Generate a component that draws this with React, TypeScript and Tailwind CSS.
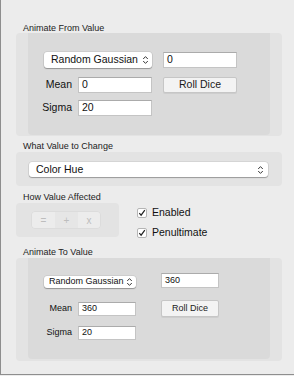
import type { ReactNode } from 'react'

const FONT = "font-['Liberation_Sans',Arial,sans-serif]"

function Chevrons() {
  return (
    <svg width="7" height="10" viewBox="0 0 7 10" className="shrink-0">
      <path d="M1.2 4 L3.5 1.6 L5.8 4" fill="none" stroke="#3a3a3a" strokeWidth="1" />
      <path d="M1.2 6 L3.5 8.4 L5.8 6" fill="none" stroke="#3a3a3a" strokeWidth="1" />
    </svg>
  )
}

function Select({ label, className }: { label: string; className: string }) {
  return (
    <div
      className={`flex items-center justify-between rounded-[3px] bg-white pr-[3px] text-[#111] shadow-[0_1px_1px_rgba(0,0,0,0.28),0_0_0_0.5px_rgba(0,0,0,0.12)] ${className}`}
    >
      <span className="whitespace-nowrap">{label}</span>
      <Chevrons />
    </div>
  )
}

function Field({ value, className }: { value: string; className: string }) {
  return (
    <div
      className={`flex items-center border border-[#c4c4c4] border-t-[#ababab] bg-white pl-[3px] text-[#111] ${className}`}
    >
      {value}
    </div>
  )
}

function Button({ label, className }: { label: string; className: string }) {
  return (
    <div
      className={`flex items-center justify-center rounded-[2px] border border-[#c6c6c6] bg-[#f3f3f3] text-[#1a1a1a] shadow-[0_1px_0_rgba(0,0,0,0.06)] ${className}`}
    >
      {label}
    </div>
  )
}

function SectionLabel({ children }: { children: ReactNode }) {
  return <div className="h-[10px] pl-[7px] text-[9px] leading-[10px] text-[#222]">{children}</div>
}

function Checkbox({ label }: { label: string }) {
  return (
    <div className="flex h-[10px] items-center text-[10.5px] text-[#111]">
      <div className="flex h-[10px] w-[10px] items-center justify-center rounded-[2px] border border-[#b5b5b5] bg-white">
        <svg width="8" height="8" viewBox="0 0 8 8">
          <path d="M1.3 4.2 L3.1 6.2 L6.8 1.2" fill="none" stroke="#222" strokeWidth="1.2" />
        </svg>
      </div>
      <span className="ml-[5px]">{label}</span>
    </div>
  )
}

export default function App() {
  return (
    <div className={`h-[376px] w-[294px] bg-[#ececec] ${FONT}`}>
      <div className="h-[375px] border-b border-l border-[#8e8e8e] pl-[15px] pr-[12px] pt-[23px]">
        {/* Animate From Value */}
        <SectionLabel>Animate From Value</SectionLabel>
        <div className="h-[103px] rounded-[4px] bg-[#e3e3e3] px-[12px]">
          <div className="h-[102px] rounded-b-[4px] bg-[#dadada] pt-[19px] text-[10.5px]">
            <div className="flex h-[16px]">
              <Select label="Random Gaussian" className="ml-[16px] h-[16px] w-[108px] pl-[7px]" />
              <Field value="0" className="ml-[11px] h-[16px] w-[74px]" />
            </div>
            <div className="mt-[9px] flex h-[16px] items-center">
              <div className="w-[44px] text-right text-[#111]">Mean</div>
              <Field value="0" className="ml-[6px] h-[16px] w-[74px]" />
              <Button label="Roll Dice" className="ml-[11px] h-[16px] w-[74px]" />
            </div>
            <div className="mt-[7px] flex h-[16px] items-center">
              <div className="w-[44px] text-right text-[#111]">Sigma</div>
              <Field value="20" className="ml-[6px] h-[16px] w-[74px]" />
            </div>
          </div>
        </div>

        {/* What Value to Change */}
        <div className="mt-[5px]">
          <SectionLabel>What Value to Change</SectionLabel>
        </div>
        <div className="mt-[1px] h-[34px] rounded-[4px] bg-[#e3e3e3] pl-[13px] pt-[10px] text-[10.5px]">
          <Select label="Color Hue" className="h-[15px] w-[239px] pl-[7px] pr-[4px]" />
        </div>

        {/* How Value Affected */}
        <div className="mt-[6px]">
          <SectionLabel>How Value Affected</SectionLabel>
        </div>
        <div className="mt-[1px] flex">
          <div className="h-[34px] w-[103px] rounded-[4px] bg-[#e3e3e3] pl-[16px] pt-[9px]">
            <div className="flex h-[16px] w-[68px] overflow-hidden rounded-[3px] text-[10px] text-[#bdbdbd] shadow-[0_0_0_0.5px_rgba(0,0,0,0.06)]">
              <div className="flex w-[23px] items-center justify-center bg-[#ececec]">=</div>
              <div className="flex w-[23px] items-center justify-center bg-[#e6e6e6]">+</div>
              <div className="flex w-[22px] items-center justify-center bg-[#ececec]">x</div>
            </div>
          </div>
          <div className="ml-[18px] flex flex-col gap-[10px] pt-[5px]">
            <Checkbox label="Enabled" />
            <Checkbox label="Penultimate" />
          </div>
        </div>

        {/* Animate To Value */}
        <div className="mt-[9px]">
          <SectionLabel>Animate To Value</SectionLabel>
        </div>
        <div className="mt-[1px] h-[103px] rounded-[4px] bg-[#e3e3e3] px-[12px]">
          <div className="h-[101px] rounded-b-[4px] bg-[#dadada] pt-[15px] text-[9px]">
            <div className="flex h-[15px] items-end">
              <Select label="Random Gaussian" className="ml-[16px] h-[12px] w-[92px] pl-[5px]" />
              <Field value="360" className="ml-[25px] h-[15px] w-[58px]" />
            </div>
            <div className="mt-[12px] flex h-[17px] items-center">
              <div className="w-[44px] text-right text-[#111]">Mean</div>
              <Field value="360" className="ml-[6px] h-[14px] w-[58px]" />
              <Button label="Roll Dice" className="ml-[25px] h-[17px] w-[58px]" />
            </div>
            <div className="mt-[9px] flex h-[14px] items-center">
              <div className="w-[44px] text-right text-[#111]">Sigma</div>
              <Field value="20" className="ml-[6px] h-[14px] w-[58px]" />
            </div>
          </div>
        </div>
      </div>
    </div>
  )
}
